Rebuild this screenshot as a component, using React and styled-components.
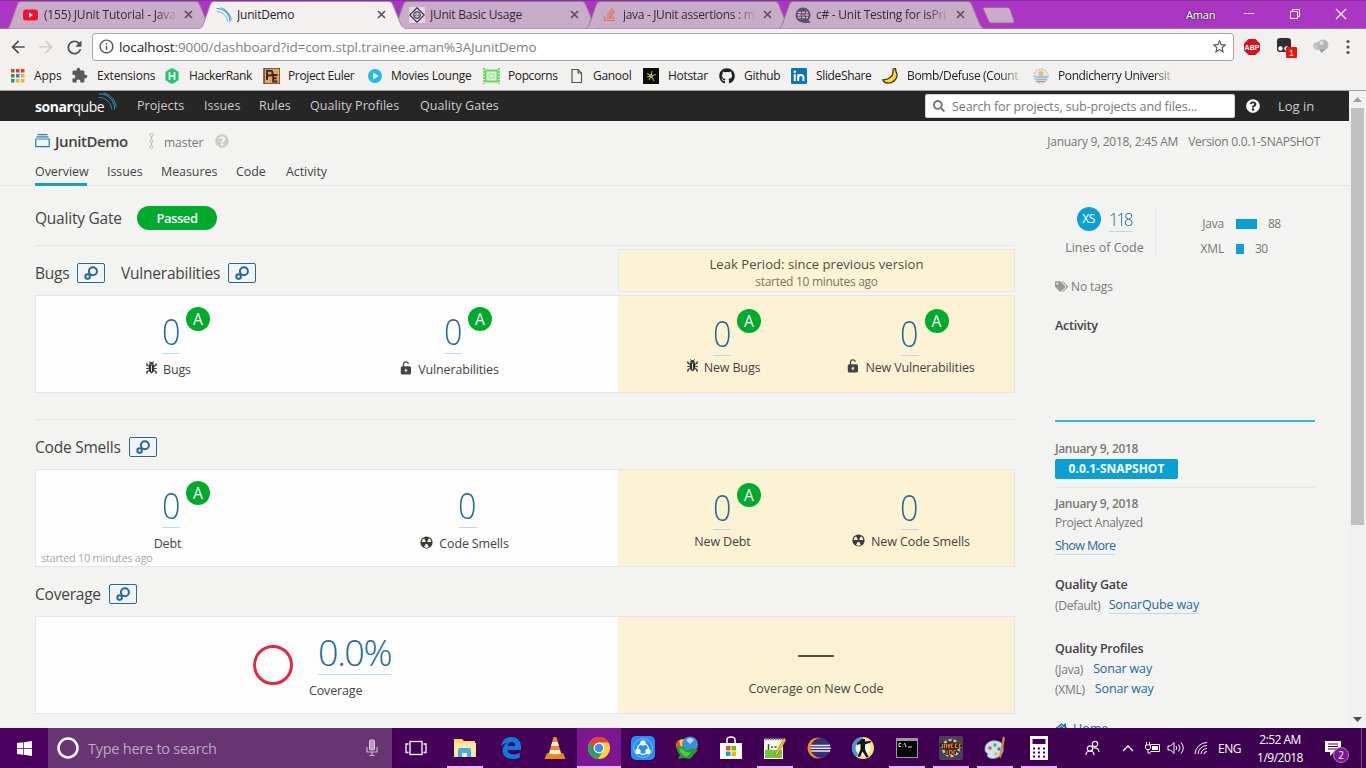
import React from 'react';
import styled, { createGlobalStyle, css } from 'styled-components';
import { MdArrowBack, MdArrowForward, MdRefresh, MdInfoOutline, MdStarBorder, MdExtension } from 'react-icons/md';
import { FaGithub, FaTags, FaHome, FaSearch, FaQuestionCircle, FaWindows, FaStackOverflow } from 'react-icons/fa';

const Global = createGlobalStyle`
  * { box-sizing: border-box; }
  body { margin: 0; overflow: hidden; background: #f3f3f2; font-family: "Open Sans", "Noto Sans", sans-serif; }
  svg { display: block; flex: none; }
`;

const Screen = styled.div`
  width: 1366px; height: 768px; display: flex; flex-direction: column; overflow: hidden;
  font-size: 13px; color: #444;
`;

/* Browser chrome */
const TabStrip = styled.div`
  height: 29px; flex: none; background: #ab36c3; display: flex; align-items: flex-start; padding-left: 7px;
  box-shadow: inset 0 1px #8e2da3, inset 0 -1px #95799b;
`;
const TabBox = styled.div`
  position: relative; width: 205px; height: 29px; margin-right: -12px; padding: 0 17px 0 16px;
  display: flex; align-items: center; z-index: ${p => (p.$active ? 2 : 1)};
`;
const TabShape = styled.svg`position: absolute; left: 0; top: 0;`;
const TabIcon = styled.div`position: relative; width: 16px; height: 16px; margin-right: 5px; flex: none;`;
const TabTitle = styled.div`
  position: relative; width: 134px; overflow: hidden; white-space: nowrap; font-size: 12px; line-height: 20px;
  color: ${p => (p.$active ? '#222' : '#352a3c')}; letter-spacing: ${p => p.$ls || '-0.1px'};
  ${p => p.$fade && css`mask-image: linear-gradient(90deg, #000 112px, transparent 134px);`}
`;
const TabClose = styled.svg`position: relative; margin-left: 6px;`;
const NewTab = styled.svg`margin: 7px 0 0 10px; position: relative; z-index: 3;`;
const WindowControls = styled.div`margin-left: auto; display: flex; height: 28px; align-items: center;`;
const Profile = styled.div`
  color: #fff; font-size: 11px; font-weight: 500; text-shadow: 0 0 2px #333, 0 0 2px #333; width: 57px; letter-spacing: -0.2px;
`;
const ControlSlot = styled.div`width: ${p => p.$w}px; display: flex; justify-content: flex-start;`;

const Toolbar = styled.div`
  height: 32px; flex: none; background: #f2f1f0; display: flex; align-items: center; padding: 3px 0 0 8px; color: #555;
`;
const NavIcon = styled.div`width: 28px; height: 20px; color: ${p => (p.$dim ? '#d0cfce' : '#505050')};`;
const AddressBar = styled.div`
  width: 1142px; height: 28px; border: 1px solid #a9a8a7; border-radius: 3px; background: #fff;
  display: flex; align-items: center; padding: 0 5px 0 5px; color: #555;
`;
const Url = styled.div`
  flex: 1; margin-left: 4px; font-size: 13.5px; line-height: 24px; color: #80807e; letter-spacing: -0.11px;
  b { font-weight: 400; color: #222; }
`;
const ExtensionRow = styled.div`flex: 1; display: flex; align-items: center; padding-left: 9px; gap: 16px;`;

const Bookmarks = styled.div`
  height: 30px; flex: none; background: #f2f1f0; border-bottom: 1px solid #a3a2a1; padding-left: 9px;
  display: grid; align-items: center;
  grid-template-columns: 62px 93px 98px 105px 116px 86px 74px 76px 72px 91px 151px 150px;
`;
const Bookmark = styled.div`
  display: flex; align-items: center; white-space: nowrap; font-size: 12px; color: #222; overflow: hidden;
  letter-spacing: ${p => p.$ls || '-0.12px'};
  svg { margin-right: ${p => p.$gap || 8}px; }
  ${p => p.$fade && css`mask-image: linear-gradient(90deg, #000 ${p.$fade - 24}px, transparent ${p.$fade}px);`}
`;

/* SonarQube page */
const Viewport = styled.div`height: 637px; flex: none; display: flex; overflow: hidden;`;
const Page = styled.div`width: 1349px; height: 637px; background: #f3f3f2; overflow: hidden;`;
const Navbar = styled.div`
  height: 30px; background: #262626; color: #ccc; display: flex; align-items: center; padding-left: 35px;
`;
const Logo = styled.div`
  width: 102px; height: 30px; display: flex; align-items: center; color: #fff; font-size: 14px; letter-spacing: -0.45px;
  b { font-weight: 700; }
  svg { margin: -9px 0 0 -6px; }
`;
const NavLinks = styled.div`display: grid; grid-template-columns: 67px 55px 51px 110px 100px; white-space: nowrap;`;
const NavLink = styled.div`font-size: 12.5px; line-height: 30px; height: 30px; letter-spacing: 0.06px;`;
const SearchBox = styled.div`
  width: 310px; height: 24px; margin-left: 405px; background: #fff; border: 1px solid #d4d4d4; display: flex; align-items: center;
  padding-left: 7px; color: #777; font-size: 12.5px; letter-spacing: -0.12px; white-space: nowrap; border-radius: 2px;
  svg { margin-right: 7px; }
  span { padding-top: 1px; }
`;
const HelpSlot = styled.div`margin-left: 11px; color: #fff;`;
const LogIn = styled.div`margin-left: 18px; font-size: 13px;`;

const ContextBar = styled.div`height: 65px; border-bottom: 1px solid #e6e6e6; padding: 9px 29px 0 35px;`;
const TitleRow = styled.div`display: flex; align-items: center; height: 22px;`;
const ProjectName = styled.div`width: 90px; margin-left: 5px; font-size: 15px; font-weight: 600; color: #444; letter-spacing: -0.45px;`;
const Branch = styled.div`width: 51px; margin-left: 4px; font-size: 12px; color: #777; padding-top: 2px;`;
const Meta = styled.div`margin-left: auto; display: flex; gap: 10px; font-size: 12px; color: #777; letter-spacing: -0.27px;`;
const PageTabs = styled.div`display: flex; gap: 20px; padding-top: 8px;`;
const PageTab = styled.div`
  width: ${p => p.$w}px; height: 26px; line-height: 24px; font-size: 12.5px; white-space: nowrap; letter-spacing: -0.08px;
  border-bottom: 3px solid ${p => (p.$active ? '#1a9cc4' : 'transparent')};
`;

const Body = styled.div`display: flex; padding-left: 35px;`;
const Main = styled.div`width: 980px;`;
const GateRow = styled.div`height: 60px; padding-top: 4px; display: flex; align-items: center; border-bottom: 1px solid #e6e6e6;`;
const Heading = styled.div`font-size: 15.5px; line-height: 22px; letter-spacing: -0.22px; width: ${p => p.$w}px; white-space: nowrap;`;
const Pill = styled.div`
  width: 80px; height: 24px; border-radius: 12px; background: #00aa2c; color: #fff; font-size: 13px; font-weight: 600;
  line-height: 24px; text-align: center; letter-spacing: -0.45px;
`;
const SectionHead = styled.div`display: flex; align-items: center; height: 49px; padding-top: ${p => p.$pt || 4}px;`;
const LinkButton = styled.div`
  width: 28px; height: 20px; border: 1px solid #236a97; border-radius: 2px; margin-right: 16px;
  display: flex; align-items: center; justify-content: center;
`;
const LeakHeader = styled.div`
  width: 397px; height: 43px; margin: -6px 0 0 auto; border: 1px solid #e6e6e6; background: #fbf3d3; text-align: center; padding-top: 4px;
`;
const LeakTitle = styled.div`font-size: 13px; line-height: 20px; letter-spacing: 0.05px; color: #504c40;`;
const LeakDate = styled.div`font-size: 12px; line-height: 15px; color: #7b776b; letter-spacing: -0.3px;`;
const Card = styled.div`height: 98px; border: 1px solid #e6e6e6; background: #fff; display: flex; position: relative;`;
const Current = styled.div`width: 582px; flex: none; background: #fdfdfd; display: flex;`;
const Leak = styled.div`width: 396px; position: relative; background: #fbf3d3; display: flex; padding-top: ${p => p.$pt ?? 2}px;`;
const Cell = styled.div`width: ${p => p.$w}px; flex: none; padding-top: 14px; display: flex; flex-direction: column; align-items: center;`;
const Value = styled.div`
  position: relative; min-width: 18px; height: 44px; line-height: 43px; border-bottom: 1px solid #b9dcec; font-size: 36px;
  font-weight: 300; color: #236a97; text-align: center; margin-left: ${p => p.$dx || 0}px; letter-spacing: ${p => p.$ls || '-1.6px'}; white-space: nowrap;
`;
const Digit = styled.span`display: inline-block; transform: scaleX(0.9); margin: 0 -1px 0 -3px;`;
const Rating = styled.div`
  position: absolute; left: 24px; top: -3px; width: 24px; height: 24px; border-radius: 50%; background: #00aa2c; color: #fff;
  font-size: 15.5px; line-height: 25px; text-align: center; letter-spacing: 0; font-weight: 500;
`;
const Label = styled.div`
  margin-top: ${p => p.$mt ?? 5}px; height: 20px; display: flex; align-items: center; font-size: 12.5px; white-space: nowrap; letter-spacing: ${p => p.$ls || '-0.15px'};
  svg { margin: -2px 6px 0 0; }
`;
const Started = styled.div`position: absolute; left: 5px; bottom: 0; font-size: 11px; line-height: 16px; color: #aaa; letter-spacing: -0.3px;`;
const Divider = styled.div`height: 27px; border-bottom: 1px solid #e6e6e6;`;
const CoverageCell = styled.div`display: flex; padding: 28px 0 0 217px;`;
const CoverageText = styled.div`display: flex; flex-direction: column; margin: -14px 0 0 16px;`;
const NoValue = styled.div`width: 36px; height: 2px; background: #575045; margin-top: 23px;`;
const Wide = styled.div`width: 396px; display: flex; flex-direction: column; align-items: center; padding-top: 15px;`;

const Side = styled.div`width: 260px; margin-left: 40px; color: #777;`;
const SizeRow = styled.div`display: flex; height: 71px; padding-top: 20px;`;
const SizeBlock = styled.div`width: 101px; height: 51px; border-right: 1px solid #e6e6e6; display: flex; flex-direction: column; align-items: center;`;
const SizeValue = styled.div`display: flex; gap: 8px; height: 26px; align-items: center; padding-right: 1px;`;
const SizeBadge = styled.div`
  width: 24px; height: 24px; border-radius: 50%; background: #0ba0d5; color: #fff; font-size: 12px; line-height: 24px; text-align: center; letter-spacing: -0.5px;
`;
const Lines = styled.div`
  width: 24px; border-bottom: 1px solid #b9dcec; font-size: 18.5px; font-weight: 300; color: #236a97; line-height: 25px; letter-spacing: -2.2px;
  span { display: inline-block; transform: scaleX(0.9); transform-origin: left; }
`;
const LinesLabel = styled.div`font-size: 12.5px; line-height: 20px; margin-top: 6px; letter-spacing: 0; margin-right: 1px;`;
const Languages = styled.div`flex: 1; padding-top: 5px;`;
const Language = styled.div`display: flex; height: 25px; align-items: center; font-size: 12px; letter-spacing: -0.5px;`;
const LangName = styled.div`width: 68px; text-align: right; letter-spacing: -0.2px;`;
const LangBar = styled.div`height: 10px; background: #0ba0d5; margin: 0 11px 0 12px;`;
const Tags = styled.div`display: flex; height: 14px; margin-top: 23px; overflow: hidden; font-size: 12px; line-height: 14px; color: #777; gap: 3px; letter-spacing: -0.1px;`;
const SideTitle = styled.div`
  font-size: ${p => p.$size || 12.5}px; font-weight: 600; color: ${p => p.$color || '#444'}; line-height: 20px; margin-top: ${p => p.$mt || 0}px; letter-spacing: ${p => p.$ls || '-0.25px'};
`;
const EventDate = styled(SideTitle)`font-size: 12px; color: #777; letter-spacing: -0.35px;`;
const Graph = styled.div`height: 86px; border-bottom: 2px solid #23c2d8;`;
const Version = styled.div`
  width: 123px; height: 20px; border-radius: 2px; background: #0ba0d5; color: #fff; font-weight: 700; font-size: 12px; line-height: 20px; text-align: center;
  letter-spacing: 0; margin-bottom: 8px;
`;
const EventText = styled.div`font-size: 12px; line-height: 18px; letter-spacing: -0.3px;`;
const SideRule = styled.div`border-bottom: 1px solid #e6e6e6; margin-bottom: 6px;`;
const SideLine = styled.div`display: flex; gap: ${p => p.$gap || 8}px; height: 20px; align-items: center; font-size: 12px; letter-spacing: -0.25px; margin-top: ${p => p.$mt || 0}px;`;
const SideLink = styled.span`
  font-size: 12.5px; color: #236a97; line-height: 16px; letter-spacing: ${p => p.$ls || '-0.15px'};
  ${p => p.$line && css`border-bottom: 1px solid #b9dcec;`}
`;
const Home = styled.div`display: flex; gap: 5px; height: 20px; margin-top: 19px; color: #236a97; font-size: 12.5px; align-items: center;`;

const Scrollbar = styled.div`width: 17px; background: #f1f1f1; display: flex; flex-direction: column; align-items: center;`;
const ScrollArrow = styled.div`height: 17px; display: flex; align-items: center;`;
const ScrollTrack = styled.div`flex: 1;`;
const Thumb = styled.div`width: 13px; height: 417px; background: #c1c1c0;`;

/* Taskbar */
const Taskbar = styled.div`height: 40px; flex: none; background: linear-gradient(90deg, #4b0060, #410053 60%, #3d004f); display: flex; color: #fff;`;
const Start = styled.div`width: 48px; display: flex; align-items: center; justify-content: center;`;
const TaskSearch = styled.div`
  width: 344px; background: #673571; display: flex; align-items: center; padding: 0 14px 0 8px; font-size: 14.5px; color: #bda6c5; letter-spacing: -0.25px;
  span { flex: 1; margin-left: 8px; }
`;
const TaskButton = styled.div`
  width: ${p => p.$w || 44}px; height: 40px; display: flex; align-items: center; justify-content: center;
  background: ${p => (p.$active ? '#7c1691' : 'transparent')};
`;
const TaskInner = styled.div`
  width: ${p => (p.$active ? 44 : 36)}px; height: 40px; display: flex; align-items: center; justify-content: center;
  ${p => p.$open && css`box-shadow: inset 0 -2px #f0b4fa;`}
`;
const Tray = styled.div`margin-left: auto; display: flex; align-items: center; height: 40px;`;
const TraySlot = styled.div`width: ${p => p.$w}px; display: flex; align-items: center;`;
const Lang = styled.div`width: 36px; font-size: 12px; letter-spacing: -0.5px;`;
const Clock = styled.div`width: 52px; font-size: 12px; line-height: 18px; text-align: center; letter-spacing: -0.5px; white-space: nowrap; padding-top: 1px;`;
const Notice = styled.div`
  position: relative; width: 41px; height: 40px; margin-left: 19px; display: flex; align-items: center;
  &::after { content: ''; position: absolute; right: 4px; top: 0; width: 1px; height: 40px; background: #75507f; }
`;
const NoticeCount = styled.div`
  position: absolute; left: 8px; top: 19px; width: 16px; height: 16px; border-radius: 50%; background: #7c1691; border: 1px solid #b07bbd; font-size: 10px; line-height: 14px; text-align: center;
`;

const S = ({ s = 16, h, box, children, ...r }) => (
  <svg width={s} height={h || s} viewBox={box || `0 0 ${s} ${h || s}`} fill="none" {...r}>{children}</svg>
);

const SonarWaves = ({ s = 16 }) => (
  <S s={s} box="0 0 16 16" stroke="#2b9dcb" strokeWidth={s > 16 ? 0.8 : 1.1} strokeLinecap="round">
    <path d="M1 1.500c7 0 13 5 13 13" /><path d="M5 .8c5.500 1.500 9.500 6 10.300 11.700" strokeWidth=".8" /><path d="M1 4.600c5.500 0 10 4.200 10.500 9.600" strokeWidth=".7" />
  </S>
);
const LinkRings = () => (
  <S s={14} stroke="#236a97" strokeWidth="2"><circle cx="8.900" cy="5.300" r="4" /><circle cx="3.600" cy="10.600" r="2.300" /></S>
);
const Bug = () => (
  <S s={11} h={14} fill="#333">
    <path d="M3.200 3.300a2.300 2.300 0 0 1 4.600 0zM2.800 3.600h5.400v6.400L5.500 12.600 2.800 10z" fill="#333" />
    <path d="M3.500 .3l.9 1.200M7.500 .3l-.9 1.200M.8 2.300v2.200l2 .8M10.200 2.300v2.200l-2 .8M.3 7.500h2.500M8.200 7.500h2.500M.8 12.800v-2.300l2-1M10.200 12.800v-2.300l-2-1" stroke="#333" strokeWidth="1" />
    <path d="M5.500 4.500v6" stroke="#ddd" strokeWidth="1" />
  </S>
);
const Lock = () => (
  <S s={12} h={14}>
    <path d="M3.500 6.500V3.500a2.400 2.400 0 0 1 4.800-.6" stroke="#444" strokeWidth="1.300" />
    <rect x=".8" y="5.300" width="10.200" height="8.200" rx="1.500" fill="#444" /><path d="M5.900 7.800v3.400M4.500 9.300h2.800" stroke="#ddd" strokeWidth="1.200" />
  </S>
);
const Smell = () => (
  <S s={13}>
    <circle cx="6.500" cy="6.500" r="6.100" fill="#3f3c38" />
    <path d="M5.900 5.400L4 2.300A5 5 0 0 0 1.700 6h3.500zM7.100 5.400L9 2.300A5 5 0 0 1 11.300 6H7.800zM5.700 7.900L4 11a5 5 0 0 0 5 0L7.300 7.900z" fill="#f3f0e6" />
    <circle cx="6.500" cy="6.400" r="1.200" fill="#3f3c38" />
  </S>
);
const Chrome = () => (
  <S s={24}>
    <circle cx="12" cy="12" r="11" fill="#fdd23c" />
    <path d="M2.500 6.500A11 11 0 0 0 11 23l5.500-8.500L12 12z" fill="#26a259" />
    <path d="M2.500 6.500A11 11 0 0 1 21.500 6.500H12L7 14z" fill="#e64135" />
    <circle cx="12" cy="12" r="5.400" fill="#fff" /><circle cx="12" cy="12" r="4.200" fill="#4a8af4" />
  </S>
);

const tabIcons = {
  youtube: <S s={16}><rect x="0" y="2.500" width="15" height="11" rx="3" fill="#f4112f" /><path d="M6 5.500v5l4-2.500z" fill="#fff" /></S>,
  sonar: <SonarWaves />,
  junit: <S s={16}><rect width="16" height="16" fill="#e9d3e8" /><path d="M8 .8L15.200 8 8 15.200.8 8z" stroke="#443b4e" strokeWidth="1.300" /><circle cx="8" cy="8" r="3.400" fill="#877f93" stroke="#443b4e" /><path d="M5 7h6M6 9.500h4M8 5v6" stroke="#d8c5da" strokeWidth=".8" /></S>,
  stack: <FaStackOverflow size={15} color="#e0705a" />,
  se: <S s={17} box="0 0 17 17"><circle cx="8" cy="8" r="7.500" fill="#5b5070" /><path d="M9 8l7 8H8z" fill="#5b5070" /><path d="M3 5.500h10M2.500 8h11M3 10.500h10" stroke="#d8b7d4" strokeWidth="1.500" strokeDasharray="3 1" /><path d="M6 8h4" stroke="#e0405a" strokeWidth="1.500" /></S>,
};

const Tab = ({ icon, title, active, fade, ls }) => (
  <TabBox $active={active}>
    <TabShape width="206" height="29" viewBox="0 0 206 29">
      <path d="M0 28.500C2 28 2.500 26 4 22.500L10.500 4Q11.500 1.500 14 1.500H189Q191.500 1.500 192.500 4L200 22.500C201.500 26 203 28 205 28.500" fill={active ? '#f2f1f0' : '#c9adc8'} stroke={active ? '#a58aab' : '#94789b'} />
      {active && <path d="M.5 28.500h204" stroke="#f2f1f0" />}
    </TabShape>
    <TabIcon>{tabIcons[icon]}</TabIcon>
    <TabTitle $active={active} $fade={fade} $ls={ls}>{title}</TabTitle>
    <TabClose width="9" height="9" viewBox="0 0 9 9"><path d="M1 1l7 7M8 1L1 8" stroke="#5c4d62" strokeWidth="1.700" /></TabClose>
  </TabBox>
);

const appsColors = [['#e03c31', '#e03c31', '#e03c31'], ['#279a5b', '#3d7de0', '#f0b428'], ['#279a5b', '#f0b428', '#f0b428']];
const bookmarks = [
  { name: 'Apps', gap: 9, icon: <S s={16}>{appsColors.map((row, r) => row.map((c, i) => <rect key={`${r}${i}`} x={2 + i * 5} y={1 + r * 5} width="3.500" height="3.500" fill={c} />))}</S> },
  { name: 'Extensions', gap: 9, ls: '-0.2px', icon: <MdExtension size={17} color="#5a5a5a" /> },
  { name: 'HackerRank', gap: 9, ls: '-0.4px', icon: <S s={16}><path d="M8 0l6.500 3.700v8.600L8 16l-6.500-3.700V3.700z" fill="#1bc86b" /><path d="M5.500 4v8M10.500 4v8M5.500 8h5" stroke="#fff" strokeWidth="1.700" /></S> },
  { name: 'Project Euler', gap: 8, ls: '-0.35px', icon: <S s={18} h={16}><rect x="2" width="16" height="16" fill="#e3a565" stroke="#5c4636" strokeWidth="1.500" /><path d="M5 12V2.800h3.200a2 2 0 0 1 0 4.700H5M15.500 7h-4.300v6.500h4.300M11.200 10.200h3.500" stroke="#3e2a22" strokeWidth="1.900" /></S> },
  { name: 'Movies Lounge', icon: <S s={16}><circle cx="8" cy="8" r="7" fill="#21b8ee" /><path d="M6 4.500v7l5.500-3.500z" fill="#fff" /></S>, ls: '-0.28px' },
  { name: 'Popcorns', icon: <S s={17} h={16}><rect x="2.500" y="2.500" width="12" height="11" fill="#d6f5cf" stroke="#6fd767" strokeWidth="2" /><path d="M1 0v16M16 0v16" stroke="#4fcf4a" strokeWidth="1.500" strokeDasharray="2 1" /><rect x="6" y="6" width="5" height="4" stroke="#a8e08f" /></S>, ls: '-0.4px' },
  { name: 'Ganool', gap: 10, ls: '-0.3px', icon: <S s={14} h={16}><path d="M3 1.500h6l3.500 3.500v9.500H3zM9 1.500V5h3.500" stroke="#555" strokeWidth="1.200" /></S> },
  { name: 'Hotstar', gap: 9, ls: '-0.3px', icon: <S s={16}><rect width="16" height="16" fill="#0b0d08" /><path d="M8 8L4 5.500M8 8l1-5M8 8l5-1.500M8 8l3 5M8 8l-2 4M8 8l-4 1" stroke="#9cae3a" strokeWidth="1.100" /><circle cx="8" cy="8" r="1.600" stroke="#c9c92e" strokeWidth=".8" /></S> },
  { name: 'Github', gap: 9, ls: '-0.3px', icon: <FaGithub size={16} color="#222" /> },
  { name: 'SlideShare', gap: 9, ls: '-0.35px', icon: <S s={16}><rect width="16" height="16" rx="1" fill="#0e76b5" /><path d="M3.800 6.200V13M7.200 13V6.200M7.200 9.500c0-3.200 5.200-3.600 5.200 0V13" stroke="#fff" strokeWidth="2" /><circle cx="3.800" cy="3.700" r="1.300" fill="#fff" /></S> },
  { name: 'Bomb/Defuse (Count', gap: 8, ls: '-0.35px', fade: 142, icon: <S s={17} h={16}><path d="M11 1l2.500-.5.500 3c3 5-1 11-7 11.500-3 .2-5.500-1-6.200-3.200C6 12 11 9 11 4z" fill="#f8cf25" stroke="#3b2c10" strokeWidth="1.200" /><path d="M12.500 5c0 4-4 8-8.500 8" stroke="#fff0a0" /></S> },
  { name: 'Pondicherry Universit', gap: 9, ls: '-0.4px', fade: 144, icon: <S s={16}><circle cx="8" cy="8" r="7" fill="#e8e7ea" stroke="#b5c0cc" strokeWidth="1.300" strokeDasharray="2 1" /><circle cx="8" cy="5.500" r="2.500" fill="#f2bb6b" /><path d="M2 9h12M3 11.500h10" stroke="#8db5d3" strokeWidth="1.500" /><path d="M4 13.500h8" stroke="#d98880" /></S> },
];

const Measure = ({ w, dx, value = '0', rating, icon, label, ls, mt }) => (
  <Cell $w={w}>
    <Value $dx={dx}><Digit>{value}</Digit>{rating && <Rating>{rating}</Rating>}</Value>
    <Label $ls={ls} $mt={mt}>{icon}{label}</Label>
  </Cell>
);
const DrillButton = () => <LinkButton><LinkRings /></LinkButton>;

const apps = [
  { k: 'view', icon: <S s={22} h={16} stroke="#fff" strokeWidth="1.300"><rect x="5" y="1.500" width="12" height="13" /><path d="M3.500 4H1v8.500h2.500M18.500 4H21v8.500h-2.500" /></S>, w: 48 },
  { k: 'files', open: 1, w: 49, icon: <S s={24} h={22}><path d="M1 2h8l2 2h11v16H1z" fill="#fbd876" /><path d="M1 6h22v14H1z" fill="#ffe9a0" /><path d="M5 20v-7q0-2 2-2h9q2 0 2 2v7h-4v-4H9v4z" fill="#42aee0" /></S> },
  { k: 'edge', w: 44, icon: <S s={22}><path d="M1 10C2 3 6 0 11.500 0 18 0 21 5 21 9.500V13H7.500c.3 3 2.700 4.500 6 4.500 2.500 0 4.500-.7 6.300-1.800v4.700C17.500 21.600 15 22 12.300 22 6 22 2.500 18 2.500 13.500c0-3.500 2-6.500 5.200-8C4.500 6 2.200 7.500 1 10zm6.600-1h7.600c0-2.500-1.200-4-3.600-4-2.300 0-3.700 1.600-4 4z" fill="#0b7bdc" /></S> },
  { k: 'vlc', w: 44, icon: <S s={22} h={24}><path d="M3 17h16l2.500 6H.5z" fill="#e8871c" /><path d="M9.500 1h3l5 18q-6.500 2.500-13 0z" fill="#f28a1b" /><path d="M8.300 6h5.400l1.200 4H7.100zM6 14h10l.9 3.500q-6 1.500-11.800 0z" fill="#eee" /></S> },
  { k: 'chrome', w: 44, active: 1, open: 1, icon: <Chrome /> },
  { k: 'shareit', w: 44, icon: <S s={24}><rect width="24" height="24" rx="5" fill="#258ff2" /><circle cx="12" cy="12" r="9.500" stroke="#79bdf8" strokeWidth="1" /><circle cx="12" cy="13" r="5.500" stroke="#fff" strokeWidth="1.300" /><circle cx="12" cy="7" r="2.700" fill="#fff" /><circle cx="7" cy="15.500" r="2.700" fill="#fff" /><circle cx="17" cy="15.500" r="2.700" fill="#fff" /></S> },
  { k: 'idm', w: 44, icon: <S s={24}><path d="M1 12Q1 3 9 3l2 5q-4 1-4 5z" fill="#f7d628" /><path d="M1 12Q0 6 4 4l2 8z" fill="#e8502a" /><circle cx="15" cy="8.500" r="8" fill="#3f8fd6" /><path d="M11 4q5-4 8 0l-4 4z" fill="#b9dcf3" /><path d="M2 10l7 1 1 3q4 1 7-2l6 2-8 9-7-1-5 1 2-4q-4-4-3-9z" fill="#1e9c36" /><path d="M4 12l4 1q3 5 8 3l-4 5q-6-1-8-9z" fill="#58c83c" /></S> },
  { k: 'store', w: 44, icon: <S s={22} h={24}><path d="M0 7h22v16H0z" fill="#fff" /><path d="M7 7V4q0-3 4-3t4 3v3" stroke="#fff" strokeWidth="1.500" /><path d="M6 10h4.500v4.500H6z" fill="#f04e1f" /><path d="M11.500 10H16v4.500h-4.500z" fill="#7db800" /><path d="M6 15.500h4.500V20H6z" fill="#0aa0ea" /><path d="M11.500 15.500H16V20h-4.500z" fill="#f9b300" /></S> },
  { k: 'npp', w: 44, open: 1, icon: <S s={22} h={23}><rect x="0" y="2" width="19" height="20" fill="#f4f9e8" /><path d="M1 13h17v8H1z" fill="#6ec83a" /><path d="M1 2h18" stroke="#777" strokeWidth="2.500" strokeDasharray="1.500 1" /><path d="M4.500 7v6M7 10h2M10.500 10h2" stroke="#3a5b28" strokeWidth="1.500" /><path d="M20 1l2 2-9 15-2 1 .500-3z" fill="#f2c22e" stroke="#9a7622" strokeWidth=".6" /></S> },
  { k: 'eclipse', w: 44, icon: <S s={24}><circle cx="11" cy="12" r="10.500" fill="#f08b24" /><circle cx="13.500" cy="12" r="10" fill="#393175" /><path d="M4 9.500h19M3.700 12.300h20M4.200 15h19" stroke="#eae8f4" strokeWidth="1.600" /></S> },
  { k: 'cs', w: 44, icon: <S s={22}><circle cx="11" cy="11" r="11" fill="#f4df85" /><path d="M11 0A11 11 0 0 0 4 19.500L11 11z" fill="#4a95cf" /><circle cx="11" cy="11" r="7.500" fill="#f7f4df" /><path d="M10 2h3v2.500l6-.5v1.200l-6 2.300v5l3.500 7.500-2 .5-4-6-2.500 5.500-2.500-.5 3-7V7L5 8V6z" fill="#161616" /></S> },
  { k: 'cmd', w: 44, open: 1, icon: <S s={22} h={20}><rect width="22" height="20" fill="#9b9b9b" /><rect x="1" y="3" width="20" height="16" fill="#050505" /><path d="M5 5.500H3v3h2M7 6v.5M7 8v.5M8.500 5l1.500 4M12 9h4" stroke="#ddd" /></S> },
  { k: 'javaee', w: 44, open: 1, icon: <S s={24}><rect width="24" height="24" rx="2" fill="#454252" /><circle cx="12" cy="12" r="8" fill="#3a2d28" stroke="#c7c3bb" strokeWidth="2.500" strokeDasharray="3 2" /><path d="M1 7h22v5.500H1zM7 14h10v5H7z" fill="#262021" /><path d="M3.500 8v3.500H1.500M5.500 12V8h2v4M9 8l1 3.500L11 8M14.500 8h-2v3.500h2M18.500 8h-2v3.500h2M22.500 8h-2v3.500h2M8 14.500v4M10.500 14.500v4h2l1-2-1-2zM17 14.500h-2v4h2" stroke="#e07a27" strokeWidth="1.200" /></S> },
  { k: 'paint', w: 44, open: 1, icon: <S s={24}><path d="M2 13C2 6 9 4 14 5s7 5 6 10-8 9-13 7-1-4-3-5-2-2-2-4z" fill="#cfe3ee" stroke="#7fa5bd" strokeWidth=".8" /><circle cx="7" cy="12" r="1.700" fill="#e34a3a" /><circle cx="12" cy="9" r="1.700" fill="#4fae45" /><circle cx="16" cy="13" r="1.700" fill="#3c78d0" /><circle cx="13" cy="18" r="1.700" fill="#f0b429" /><path d="M20 0l2 2-4 20-2-1z" fill="#d58a3b" /></S> },
  { k: 'calc', w: 44, open: 1, icon: <S s={18} h={24}><rect width="18" height="24" fill="#fff" /><path d="M2.500 3h13v5h-13z" fill="#43005a" /><path d="M3 12.500h13M3 16.500h13M3 20.500h13" stroke="#43005a" strokeWidth="2" strokeDasharray="2 3" /></S> },
];

export default function App() {
  return (
    <Screen>
      <Global />
      <TabStrip>
        <Tab icon="youtube" title="(155) JUnit Tutorial - Java" fade ls="-0.17px" />
        <Tab icon="sonar" title="JunitDemo" active ls="-0.2px" />
        <Tab icon="junit" title="JUnit Basic Usage" ls="-0.25px" />
        <Tab icon="stack" title="java - JUnit assertions : m" fade ls="-0.32px" />
        <Tab icon="se" title="c# - Unit Testing for isPri" fade ls="-0.25px" />
        <NewTab width="33" height="17" viewBox="0 0 33 17"><path d="M1 1.500Q1 .5 2.500.5H25Q27 .5 28 2L32 14Q32.500 16 31 16H9Q7.500 16 7 15z" fill="#c9adc8" stroke="#946c9e" /></NewTab>
        <WindowControls>
          <Profile>Aman</Profile>
          <ControlSlot $w={46}><S s={12} stroke="#fff"><path d="M1 5.500h10" /></S></ControlSlot>
          <ControlSlot $w={46}><S s={12} stroke="#fff"><path d="M1.500 3.500h7v7h-7zM3.500 3.500v-2h7v7h-2" /></S></ControlSlot>
          <ControlSlot $w={31}><S s={12} stroke="#fff" strokeWidth="1.200"><path d="M1 1l10 10M11 1L1 11" /></S></ControlSlot>
        </WindowControls>
      </TabStrip>
      <Toolbar>
        <NavIcon><MdArrowBack size={20} /></NavIcon>
        <NavIcon $dim><MdArrowForward size={20} /></NavIcon>
        <NavIcon><MdRefresh size={21} /></NavIcon>
        <AddressBar>
          <MdInfoOutline size={17} />
          <Url><b>localhost</b>:9000/dashboard?id=com.stpl.trainee.aman%3AJunitDemo</Url>
          <MdStarBorder size={17} />
        </AddressBar>
        <ExtensionRow>
          <S s={18} h={18}><path d="M5.500 1h7L17 5.500v7L12.500 17h-7L1 12.500v-7z" fill="#d8111c" /><text x="9" y="12" fill="#fff" fontSize="7" fontWeight="700" textAnchor="middle" fontFamily="Liberation Sans">ABP</text></S>
          <S s={20} h={22}><rect x="0" y="2" width="14" height="14" rx="3" fill="#303030" /><circle cx="3.500" cy="12.500" r="2.200" fill="#fff" /><circle cx="9.500" cy="12.500" r="2.200" fill="#fff" /><rect x="9" y="11" width="11" height="11" rx="1" fill="#f50f0f" /><text x="14.500" y="20" fill="#fff" fontSize="9" textAnchor="middle" fontFamily="Liberation Sans">1</text></S>
          <S s={17}><ellipse cx="4.500" cy="8" rx="4.500" ry="4" fill="#c4c4c4" /><circle cx="10" cy="7" r="5.500" fill="#b5b5b5" /><circle cx="8.500" cy="5" r="2.200" fill="#dcdcdc" /><path d="M6 12l6-1-3 4z" fill="#999" /></S>
          <S s={6} h={16}><circle cx="2" cy="2.500" r="1.600" fill="#555" /><circle cx="2" cy="8" r="1.600" fill="#555" /><circle cx="2" cy="13.500" r="1.600" fill="#555" /></S>
        </ExtensionRow>
      </Toolbar>
      <Bookmarks>
        {bookmarks.map(b => <Bookmark key={b.name} $gap={b.gap} $fade={b.fade} $ls={b.ls}>{b.icon}{b.name}</Bookmark>)}
      </Bookmarks>

      <Viewport>
        <Page>
          <Navbar>
            <Logo><b>sonar</b>qube<SonarWaves s={19} /></Logo>
            <NavLinks>
              <NavLink>Projects</NavLink><NavLink>Issues</NavLink><NavLink>Rules</NavLink><NavLink>Quality Profiles</NavLink><NavLink>Quality Gates</NavLink>
            </NavLinks>
            <SearchBox><FaSearch size={12} /><span>Search for projects, sub-projects and files...</span></SearchBox>
            <HelpSlot><FaQuestionCircle size={14} /></HelpSlot>
            <LogIn>Log in</LogIn>
          </Navbar>
          <ContextBar>
            <TitleRow>
              <S s={15} h={14} stroke="#2a80ae"><path d="M.8 5h13.400v7.700H.8zM1.500 2.800h12M2.500 .6h10" strokeWidth="1.200" /></S>
              <ProjectName>JunitDemo</ProjectName>
              <S s={15} h={18} stroke="#bbb"><circle cx="6.500" cy="3" r="1.600" /><circle cx="6.500" cy="9" r="1.600" /><circle cx="6.500" cy="15" r="1.600" /><path d="M6.500 4.600v2.800M6.500 10.600v2.800" /></S>
              <Branch>master</Branch>
              <FaQuestionCircle size={14} color="#cfcdca" />
              <Meta><span>January 9, 2018, 2:45 AM</span><span>Version 0.0.1-SNAPSHOT</span></Meta>
            </TitleRow>
            <PageTabs>
              <PageTab $w={52} $active>Overview</PageTab><PageTab $w={34}>Issues</PageTab><PageTab $w={55}>Measures</PageTab><PageTab $w={30}>Code</PageTab><PageTab $w={43}>Activity</PageTab>
            </PageTabs>
          </ContextBar>
          <Body>
            <Main>
              <GateRow><Heading $w={102}>Quality Gate</Heading><Pill>Passed</Pill></GateRow>
              <SectionHead $pt={5}>
                <Heading $w={42}>Bugs</Heading><DrillButton />
                <Heading $w={107}>Vulnerabilities</Heading><DrillButton />
                <LeakHeader><LeakTitle>Leak Period: since previous version</LeakTitle><LeakDate>started 10 minutes ago</LeakDate></LeakHeader>
              </SectionHead>
              <Card>
                <Current>
                  <Measure w={265} dx={5} rating="A" icon={<Bug />} label="Bugs" />
                  <Measure w={297} dx={7} rating="A" icon={<Lock />} label="Vulnerabilities" />
                </Current>
                <Leak>
                  <Measure w={211} dx={-3} rating="A" icon={<Bug />} label="New Bugs" mt={1} />
                  <Measure w={164} dx={-3} rating="A" icon={<Lock />} label="New Vulnerabilities" mt={1} />
                </Leak>
              </Card>
              <Divider />
              <SectionHead><Heading $w={94}>Code Smells</Heading><DrillButton /></SectionHead>
              <Card>
                <Current>
                  <Measure w={263} dx={7} rating="A" label="Debt" />
                  <Measure w={331} dx={6} icon={<Smell />} label="Code Smells" />
                </Current>
                <Leak>
                  <Measure w={209} dx={-1} rating="A" label="New Debt" mt={1} />
                  <Measure w={168} dx={-3} icon={<Smell />} label="New Code Smells" mt={1} ls="-0.1px" />
                </Leak>
                <Started>started 10 minutes ago</Started>
              </Card>
              <SectionHead><Heading $w={74}>Coverage</Heading><DrillButton /></SectionHead>
              <Card>
                <Current>
                  <CoverageCell>
                    <S s={40}><circle cx="20" cy="20" r="18.500" stroke="#df2b40" strokeWidth="3" /></S>
                    <CoverageText><Value $dx={9} $ls="-1.4px">0.0%</Value><Label>Coverage</Label></CoverageText>
                  </CoverageCell>
                </Current>
                <Leak $pt={0}><Wide><NoValue /><Label $mt={21} $ls="-0.03px">Coverage on New Code</Label></Wide></Leak>
              </Card>
            </Main>
            <Side>
              <SizeRow>
                <SizeBlock><SizeValue><SizeBadge>XS</SizeBadge><Lines><span>118</span></Lines></SizeValue><LinesLabel>Lines of Code</LinesLabel></SizeBlock>
                <Languages>
                  <Language><LangName>Java</LangName><LangBar style={{ width: Math.round(88 * 0.2386) }} />88</Language>
                  <Language><LangName>XML</LangName><LangBar style={{ width: Math.round(30 * 0.2667) }} />30</Language>
                </Languages>
              </SizeRow>
              <Tags><FaTags size={13} color="#999" />No tags</Tags>
              <SideTitle $mt={22}>Activity</SideTitle>
              <Graph />
              <EventDate $mt={17}>January 9, 2018</EventDate>
              <Version>0.0.1-SNAPSHOT</Version>
              <SideRule />
              <EventDate>January 9, 2018</EventDate>
              <EventText>Project Analyzed</EventText>
              <SideLine $mt={4}><SideLink $line $ls="-0.6px">Show More</SideLink></SideLine>
              <SideTitle $mt={19}>Quality Gate</SideTitle>
              <SideLine>(Default)<SideLink $line>SonarQube way</SideLink></SideLine>
              <SideTitle $mt={24}>Quality Profiles</SideTitle>
              <SideLine $gap={10}>(Java)<SideLink>Sonar way</SideLink></SideLine>
              <SideLine $gap={10}>(XML)<SideLink>Sonar way</SideLink></SideLine>
              <Home><FaHome size={13} />Home</Home>
            </Side>
          </Body>
        </Page>
        <Scrollbar>
          <ScrollArrow><S s={9} h={5}><path d="M0 5l4.500-5L9 5z" fill="#a0a0a0" /></S></ScrollArrow>
          <ScrollTrack><Thumb /></ScrollTrack>
          <ScrollArrow><S s={9} h={5}><path d="M0 0l4.500 5L9 0z" fill="#505050" /></S></ScrollArrow>
        </Scrollbar>
      </Viewport>

      <Taskbar>
        <Start><FaWindows size={17} /></Start>
        <TaskSearch>
          <S s={24}><circle cx="12" cy="12" r="9.500" stroke="#fff" strokeWidth="2.500" /></S>
          <span>Type here to search</span>
          <S s={12} h={18}><rect x="3.500" y="1" width="5" height="10" rx="1" fill="#b79bc0" stroke="#d6c5da" /><path d="M1 8v5h10V8M6 13v4M3.500 16.500h5" stroke="#c7b3cd" strokeWidth="1.200" /></S>
        </TaskSearch>
        {apps.map(a => <TaskButton key={a.k} $w={a.w} $active={a.active}><TaskInner $active={a.active} $open={a.open}>{a.icon}</TaskInner></TaskButton>)}
        <Tray>
          <TraySlot $w={37}><S s={15} h={16} stroke="#fff" strokeWidth="1.200"><circle cx="10" cy="4" r="2.700" /><circle cx="5" cy="8.500" r="2.700" /><path d="M1 15q0-4 4-4t4 4M8.500 8q5-1 5.500 4" /></S></TraySlot>
          <TraySlot $w={22}><S s={12} h={8} stroke="#fff" strokeWidth="1.300"><path d="M1 7l5-5 5 5" /></S></TraySlot>
          <TraySlot $w={23}><S s={17} h={14} stroke="#fff"><path d="M6.500 3.500h9v7h-9M2.500 1v3M5.500 1v3M1.500 4h5v3l-1 1.500h-3L1.500 7zM4 8.500V12h3" /><rect x="8" y="5" width="6" height="4" fill="#fff" stroke="none" /></S></TraySlot>
          <TraySlot $w={27}><S s={18} h={14} stroke="#fff"><path d="M1 5h2.500L7 1.500v11L3.500 9H1zM9 5q1.500 2 0 4M11.500 3.500q3 3.500 0 7M14 1.500q4.500 5.500 0 11" /></S></TraySlot>
          <TraySlot $w={24}><S s={14} stroke="#fff"><path d="M1 13A12 12 0 0 1 13 1.500M4 13a9 9 0 0 1 9-8.500M7 13a6 6 0 0 1 6-5.500M10 13a3 3 0 0 1 3-2.500" /></S></TraySlot>
          <Lang>ENG</Lang>
          <Clock>2:52 AM<br />1/9/2018</Clock>
          <Notice><S s={16} h={17}><path d="M0 1h16v11h-7l-4 4v-4H0z" fill="#fff" /><path d="M3 4h10M3 6.500h10M3 9h10" stroke="#470059" /></S><NoticeCount>2</NoticeCount></Notice>
        </Tray>
      </Taskbar>
    </Screen>
  );
}
